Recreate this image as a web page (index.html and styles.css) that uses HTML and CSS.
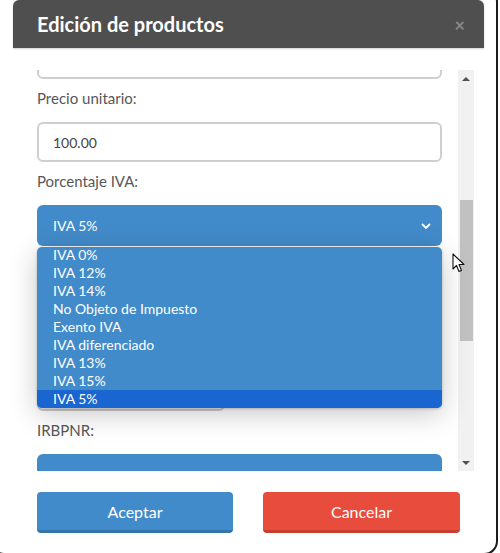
FILE: index.html
```html
<!DOCTYPE html>
<html lang="es">
<head>
    <meta charset="UTF-8">
    <title>Edición de productos</title>
    <link rel="stylesheet" href="styles.css">
</head>
<body>
    <div class="screen">
        <div class="modal">
            <div class="modal-header">
                <h2 class="modal-title">Edición de productos</h2>
                <span class="close">&times;</span>
            </div>

            <div class="modal-body">
                <div class="form">
                    <input class="field first" type="text" value="">

                    <label class="label">Precio unitario:</label>
                    <input class="field" type="text" value="100.00">

                    <label class="label">Porcentaje IVA:</label>
                    <div class="select main">
                        <span>IVA 5%</span>
                        <svg class="chevron" width="10" height="6" viewBox="0 0 10 6"><polyline points="1,1 5,5 9,1" fill="none" stroke="#fff" stroke-width="1.8"/></svg>
                    </div>

                    <!-- fields hidden under the open list -->
                    <label class="label"></label>
                    <div class="select hidden"></div>

                    <label class="label"></label>
                    <input class="field narrow" type="text" value="">

                    <label class="label">IRBPNR:</label>
                    <div class="select"><span>Ninguno</span></div>
                </div>

                <div class="scrollbar">
                    <div class="sb-btn"><span class="tri-up"></span></div>
                    <div class="sb-thumb"></div>
                    <div class="sb-fill"></div>
                    <div class="sb-btn"><span class="tri-down"></span></div>
                </div>
            </div>

            <div class="modal-footer">
                <button class="btn btn-primary">Aceptar</button>
                <button class="btn btn-danger">Cancelar</button>
            </div>

            <!-- open native list of the IVA select -->
            <ul class="options">
                <li>IVA 0%</li>
                <li>IVA 12%</li>
                <li>IVA 14%</li>
                <li>No Objeto de Impuesto</li>
                <li>Exento IVA</li>
                <li>IVA diferenciado</li>
                <li>IVA 13%</li>
                <li>IVA 15%</li>
                <li class="selected">IVA 5%</li>
            </ul>

            <svg class="cursor" width="14" height="20" viewBox="0 0 14 20">
                <path d="M1 1 L1 16 L4.5 12.5 L7 18.5 L9.5 17.5 L7 11.5 L12 11.5 Z" fill="#fff" stroke="#111" stroke-width="1.1" stroke-linejoin="round"/>
            </svg>
        </div>
    </div>
</body>
</html>
```

FILE: styles.css
```css
body {
    margin: 0;
    background: #fff;
    font-family: 'Lato', 'Open Sans', sans-serif;
    overflow: hidden;
    width: 500px;
    height: 553px;
}

.screen {
    box-sizing: border-box;
    width: 508px;
    height: 567px;
    margin: -12px 0 0 -10px;
    border: 2px solid #1b1b1b;
    border-radius: 14px;
    background: #fff;
    overflow: hidden;
}

.modal {
    position: relative;
    width: 471px;
    margin: 10px 0 0 21px;
    background: #fff;
}

.modal-header {
    position: relative;
    z-index: 1;
    height: 48px;
    padding: 0 24px;
    display: flex;
    align-items: center;
    justify-content: space-between;
    background: #4f4f4f;
    border-radius: 6px 6px 0 0;
    box-shadow: 0 1px 2px rgba(0, 0, 0, 0.18);
}

.modal-title {
    margin: 0;
    color: #fff;
    font-size: 20px;
    font-weight: bold;
}

.close {
    color: #8a8a8a;
    font-size: 18px;
    font-weight: bold;
    margin-top: 2px;
    margin-right: -5px;
}

.modal-body {
    display: flex;
    gap: 16px;
    height: 401px;
    padding: 22px 10px 0 24px;
}

.form {
    width: 405px;
    overflow: hidden;
    display: flex;
    flex-direction: column;
    align-items: flex-start;
}

.form > * {
    flex-shrink: 0;
}

.label {
    height: 20px;
    line-height: 20px;
    margin: 9px 0 14px;
    font-size: 15px;
    color: #575757;
}

.field {
    box-sizing: border-box;
    width: 405px;
    height: 40px;
    margin: 0;
    padding: 0 14px;
    border: 2px solid #cfcfcf;
    border-radius: 6px;
    font-family: inherit;
    font-size: 14px;
    color: #444;
    outline: none;
}

.field.first {
    margin-top: -31px;
}

.field.narrow {
    width: 188px;
    height: 39px;
}

.select {
    box-sizing: border-box;
    width: 405px;
    height: 42px;
    padding: 0 11px 0 16px;
    display: flex;
    align-items: center;
    justify-content: space-between;
    background: #428bca;
    border-radius: 6px;
    color: #fff;
    font-size: 14px;
}

.select.main {
    height: 41px;
}

.select.hidden {
    height: 40px;
}

.chevron {
    display: block;
}

.scrollbar {
    width: 16px;
    height: 401px;
    background: #f1f1f1;
    display: flex;
    flex-direction: column;
}

.sb-btn {
    height: 17px;
    display: flex;
    align-items: center;
    justify-content: center;
}

.tri-up {
    border-left: 4px solid transparent;
    border-right: 4px solid transparent;
    border-bottom: 4px solid #505050;
}

.tri-down {
    border-left: 4px solid transparent;
    border-right: 4px solid transparent;
    border-top: 4px solid #505050;
}

.sb-thumb {
    height: 141px;
    margin: 113px 1px 0 2px;
    background: #c1c1c1;
}

.sb-fill {
    flex: 1;
}

.modal-footer {
    display: flex;
    gap: 30px;
    padding: 21px 24px 0;
}

.btn {
    height: 41px;
    border: none;
    border-radius: 4px;
    color: #fff;
    font-family: inherit;
    font-size: 16px;
    cursor: pointer;
}

.btn-primary {
    width: 196px;
    background: #428bca;
    border-bottom: 3px solid #3475ad;
}

.btn-danger {
    width: 197px;
    background: #e74c3c;
    border-bottom: 3px solid #c73e30;
}

.options {
    position: absolute;
    top: 247px;
    left: 24px;
    width: 405px;
    height: 161px;
    margin: 0;
    padding: 0;
    list-style: none;
    overflow: hidden;
    background: #428bca;
    border-radius: 5px;
    box-shadow: 0 6px 28px rgba(0, 0, 0, 0.22), 0 1px 3px rgba(0, 0, 0, 0.2);
}

.options li {
    height: 18px;
    line-height: 18px;
    padding-left: 16px;
    color: #fff;
    font-size: 14px;
}

.options li:first-child {
    margin-top: -1px;
}

.options li.selected {
    background: #1a66d0;
}

.cursor {
    position: absolute;
    top: 253px;
    left: 439px;
}
```
